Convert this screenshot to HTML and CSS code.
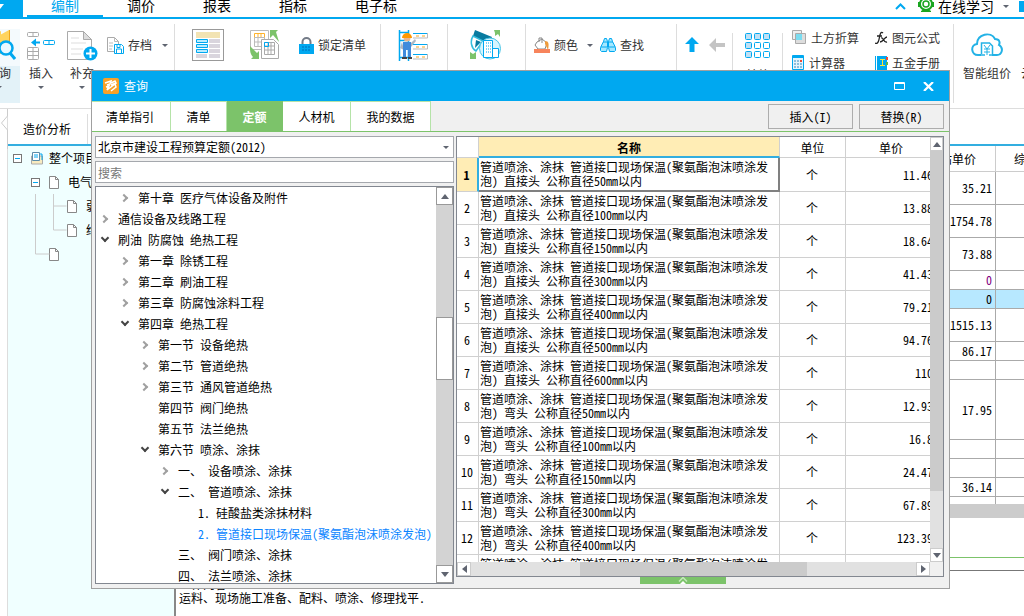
FILE: index.html
```html
<!DOCTYPE html>
<html lang="zh-CN">
<head>
<meta charset="utf-8">
<title>查询</title>
<link rel="stylesheet" href="styles.css">
</head>
<body>
<div class="app">
  <header class="menu">
    <div class="menu-app"><svg width="8" height="6" viewBox="0 0 8 6"><path d="M0 0h4L0 5z" fill="#fff"/></svg></div>
    <nav class="menu-tabs">
      <button class="menu-tab active">编制</button>
      <button class="menu-tab">调价</button>
      <button class="menu-tab">报表</button>
      <button class="menu-tab">指标</button>
      <button class="menu-tab wide">电子标</button>
    </nav>
    <div class="menu-right">
      <svg width="11" height="8" viewBox="0 0 11 8"><path d="M1 7l4.500-4.500L10 7" fill="none" stroke="#00a8f0" stroke-width="2"/></svg>
      <svg width="16" height="14" viewBox="0 0 16 14"><circle cx="8" cy="5" r="6" fill="none" stroke="#19a51f" stroke-width="2"/><circle cx="8" cy="5" r="3" fill="none" stroke="#19a51f" stroke-width="1.500"/><path d="M0 3h2v5H0zM14 3h2v5h-2zM3 12l3-2h4l3 2v1H3z" fill="#19a51f"/></svg>
      <span>在线学习</span>
      <i class="drop"></i>
      <b class="edge"></b>
    </div>
  </header>

  <section class="ribbon">
    <div class="group g1">
      <button class="big cut"><svg width="30" height="32" viewBox="0 0 30 32"><path d="M5 6l10-4v23H5z" fill="#ffd45e"/><path d="M14 6l9-5v23h-9z" fill="#ffd45e"/><path d="M23 1h1v24h-1z" fill="#f0a81c"/><circle cx="20" cy="19" r="6.500" fill="#e9f8ff" stroke="#00a8f0" stroke-width="2.500"/><path d="M24 24l5 6" stroke="#00a8f0" stroke-width="3"/></svg><span>查询</span><i class="drop"></i></button>
      <button class="big"><svg width="30" height="32" viewBox="0 0 30 32"><g fill="none" stroke="#aaa"><rect x="1.500" y="3.500" width="11" height="4" rx="1"/><path d="M7 3.500v4"/><rect x="1.500" y="18.500" width="11" height="12" rx="1"/><path d="M7 18.500v12M1.500 22.500h11M1.500 26.500h11"/></g><path d="M5 13.500l5-4v3h4v2h-4v3z" fill="#00a8f0"/><rect x="17.500" y="11.500" width="11" height="4" rx="1" fill="none" stroke="#00a8f0"/><path d="M23 11.500v4" stroke="#00a8f0"/></svg><span>插入</span><i class="drop"></i></button>
      <button class="big"><svg width="32" height="32" viewBox="0 0 32 32"><path d="M1.500 2.500h16l8 8v20h-24z" fill="#fff" stroke="#aaa"/><path d="M17.500 2.500v8h8z" fill="#ddd" stroke="#aaa"/><path d="M5 9h8M5 14h15M5 20h12M5 25h10" stroke="#ddd"/><circle cx="24.500" cy="24.500" r="7" fill="#00a8f0"/><path d="M20 24.500h9M24.500 20v9" stroke="#fff" stroke-width="2"/></svg><span>补充</span><i class="drop"></i></button>
      <button class="small"><svg width="17" height="17" viewBox="0 0 17 17"><path d="M.500.500h7l4 4v10h-11z" fill="#fff" stroke="#aaa"/><path d="M7.500.500v4h4M2 6h4M2 9h4M2 12h3" fill="none" stroke="#bbb"/><path d="M7.500 7.500h7l2 2v7h-9z" fill="#fff" stroke="#00a8f0"/><path d="M9.500 16v-4h5v4M10 7.500v3h3v-3" fill="none" stroke="#00a8f0"/></svg><span>存档</span><i class="drop"></i></button>
    </div>
    <div class="group g2">
      <button class="big"><svg width="32" height="32" viewBox="0 0 32 32"><rect x=".500" y=".500" width="31" height="31" fill="#fff" stroke="#999"/><path fill="#f2e3b3" d="M4 3h24v6H4z"/><g fill="#b8ecff" stroke="#00a8f0"><path d="M4.500 10.500h11v3h-11zM4.500 15.500h11v3h-11zM4.500 20.500h11v3h-11z"/></g><path fill="#d9d5dd" d="M17 10h11v4H17zM17 15h11v4H17zM17 20h11v4H17zM17 25h11v4H17zM4 25h11v4H4z"/></svg><span>整理清单</span></button>
      <button class="big"><svg width="30" height="32" viewBox="0 0 30 32"><path d="M.500 1.500h18v19H.500z" fill="#fff" stroke="#bbb"/><path d="M4.500 4.500h10v4h-10zM8 4.500v4M11 4.500v4" fill="none" stroke="#ffb32c"/><path d="M4.500 8.500h10v9h-10zM8 9v8M4.500 13h10" fill="none" stroke="#bbb"/><path d="M11.500 10.500h12l5 5v14h-17z" fill="#fff" stroke="#aaa"/><path d="M14.500 13.500h10v12h-10zM18 13v12M21 13v12M14.500 17h10M14.500 21h10" fill="none" stroke="#aaa"/><path d="M14.500 13.500h4v4h-4z" fill="none" stroke="#00a8f0"/><path d="M20 1h8l-2 2 3 10-6-7-3 3zM0 17l7 7 2-2v8H1l2-2c-3-3-3-7-3-11z" fill="#7cc36a"/></svg><span>复用数据</span></button>
      <button class="small"><svg width="15" height="17" viewBox="0 0 15 17"><path d="M3.500 8V5a4 4 0 0 1 8 0v3" fill="none" stroke="#737b87" stroke-width="2"/><path d="M0 7h15v10H0z" fill="#00a8f0"/><path d="M3 10h9M3 13h9" stroke="#0070b8" stroke-dasharray="2 1"/></svg><span>锁定清单</span></button>
    </div>
    <div class="group g3">
      <button class="big"><svg width="32" height="32" viewBox="0 0 32 32"><path d="M1.500 1v31M10.500 1v31M1 3.500h10M1 11.500h10M1 28.500h10" stroke="#00a8f0" stroke-width="1.500"/><path d="M15 4.500h14M15 15.500h14M15 25.500h14" stroke="#00a8f0"/><path d="M29.500 4v5H15M29.500 15v5H15M29.500 25v5H15" fill="none" stroke="#bbb"/><path d="M18 7h3M24 7h3M18 18h3M24 18h3M18 28h3M24 28h3" stroke="#f5a623"/><circle cx="9" cy="9" r="3.500" fill="#e9b58d"/><path d="M4 9a5 5 0 0 1 10 0z" fill="#ff9800"/><path d="M4 13l-2 6 4 2zM13 14l4-4 1 2-5 6z" fill="#aeb7c2"/><path d="M5 13h8v15h-3v-7H8v7H5z" fill="#3f8bdc"/><path d="M4 28h5v2H4zM10 28h4v2h-4z" fill="#444"/></svg><span>安装费用</span></button>
    </div>
    <div class="group g4">
      <button class="big"><svg width="32" height="32" viewBox="0 0 32 32"><path d="M5 1l17 7-3 7L3 7z" fill="#087ba0"/><path d="M3 7l10 5-7 10C1 19 0 12 3 7z" fill="#fff" stroke="#35bddd" stroke-width="1.500"/><path d="M6 11l5 2-6 6z" fill="#087ba0"/><circle cx="20" cy="19.500" r="10.500" fill="#d5f5ff" stroke="#4ac5e6"/><path d="M13.500 11.500h9v17h-9zM22.500 19.500h6v9h-6" fill="#fff" stroke="#00a8f0"/><path d="M16 14h5M16 17h5M16 20h5M16 23h5" stroke="#00a8f0" stroke-dasharray="1 1"/><path d="M24 1h6v7l-2-3-3 2V4zM0 30v-7l3 2 3-2v7z" fill="#7cc36a"/></svg><span>复用组价</span></button>
    </div>
    <div class="group g5">
      <button class="small"><svg width="17" height="16" viewBox="0 0 17 16"><path d="M3 5l5-3 5 4-2 6H4L1 8z" fill="#fff" stroke="#888"/><path d="M5 5V1h3v5" fill="none" stroke="#888"/><path d="M11 4c4 0 4 3 3 9l-3-6z" fill="#ee9b3c"/><path fill="#f7845c" d="M0 12h16v4H0z"/></svg><span>颜色</span><i class="drop"></i></button>
      <button class="small find"><svg width="16" height="16" viewBox="0 0 16 16"><g fill="#a5e8ff" stroke="#00a8f0"><path d="M3.500 4.500l1-3h2l1 3v6l-1 4h-5l-1-1v-3zM12.500 4.500l-1-3h-2l-1 3v6l1 4h5l1-1v-3z"/></g><path d="M1 10h6M9 10h6M3 5h10" stroke="#00a8f0"/></svg><span>查找</span></button>
    </div>
    <div class="group g6 short">
      <button class="tool" aria-label="上移"><svg width="14" height="15" viewBox="0 0 14 15"><path d="M7 0l7 7H9.500v8h-5V7H0z" fill="#00a8f0"/></svg></button>
      <button class="tool" aria-label="左移"><svg width="16" height="14" viewBox="0 0 16 14"><path d="M0 7l7-7v5h9v4H7v5z" fill="#c4c4c4"/></svg></button>
    </div>
    <div class="group g7 short">
      <button class="big"><svg width="26" height="26" viewBox="0 0 26 26"><g fill="#bfe0f5" stroke="#00a8f0"><rect x=".500" y=".500" width="6" height="6" rx="1"/><rect x="9.500" y=".500" width="6" height="6" rx="1"/><rect x="18.500" y=".500" width="6" height="6" rx="1"/><rect x=".500" y="9.500" width="6" height="6" rx="1"/><rect x=".500" y="18.500" width="6" height="6" rx="1"/></g><g fill="#fff" stroke="#00a8f0"><rect x="9.500" y="9.500" width="6" height="6" rx="1"/><rect x="18.500" y="9.500" width="6" height="6" rx="1"/><rect x="9.500" y="18.500" width="6" height="6" rx="1"/><rect x="18.500" y="18.500" width="6" height="6" rx="1"/></g></svg><span>其他</span></button>
    </div>
    <div class="group g8">
      <button class="small"><svg width="15" height="15" viewBox="0 0 15 15"><path d="M.500.500h9v9h-9z" fill="#eee" stroke="#aaa"/><path d="M3.500 3.500h10v10h-10z" fill="#ddd" stroke="#aaa"/><path d="M4 4h6v6H4z" fill="#7bdcf0"/></svg><span>土方折算</span></button>
      <button class="small"><svg width="13" height="14" viewBox="0 0 13 14"><path d="M8 2C6 0 5 3 4.500 6S3 14 0 12M2 5h5M6 7c3-1 2 5 6 4M12 6c-3 0-3 5-7 5" fill="none" stroke="#222" stroke-width="1.300"/></svg><span>图元公式</span></button>
      <button class="small"><svg width="13" height="15" viewBox="0 0 13 15"><path d="M.500.500h11v14H.500z" fill="#e5f5fc" stroke="#00a8f0"/><path d="M0 1h12v2H0z" fill="#00a8f0"/><path d="M2 6h8M2 9h8M2 12h8" stroke="#3887bb" stroke-dasharray="2 1"/><path d="M8 5h2v2H8z" fill="#ef4b34"/></svg><span>计算器</span></button>
      <button class="small"><svg width="13" height="14" viewBox="0 0 13 14"><path d="M0 0h1v14H0zM2 0h10v14H2z" fill="#00a8f0"/><path d="M5 3.500h5M7.500 3v7M5 9.500h5" stroke="#ffe735"/><path fill="#ef4b34" d="M11 1h2v3h-2z"/><path fill="#62b64b" d="M11 6h2v3h-2z"/></svg><span>五金手册</span></button>
    </div>
    <div class="group g9">
      <button class="big"><svg width="32" height="32" viewBox="0 0 32 32"><path d="M10 26H7C0 26-1 16 6 15c0-10 14-13 18-5 5 0 5 4 4 6 5 3 3 10-2 10h-5" fill="none" stroke="#23b2e6" stroke-width="2"/><path d="M10.500 25V14h8l3 3v8M9 26h5M18 26h5" fill="none" stroke="#23b2e6" stroke-width="1.500"/><path d="M13 16l3 4 3-4M13 20h6M13 23h6M16 20v6" fill="none" stroke="#23b2e6"/></svg><span>智能组价</span></button>
      <button class="big"><span class="no-icon">云检查</span></button>
    </div>
  </section>

  <div class="work">
    <div class="gutter"><svg width="8" height="40" viewBox="0 0 8 40"><path d="M7.500 0v7L1.500 14l6 7v19" fill="none" stroke="#ccc"/></svg></div>
    <aside class="project">
      <div class="project-tab"><span>造价分析</span></div>
      <div class="project-tree">
        <svg class="connectors" width="60" height="64" viewBox="0 0 60 64"><path d="M.500 0v60h14M18.500 0v36h13M18.500 12h13" fill="none" stroke="#ccc"/></svg>
        <div class="node"><i class="minus"></i><svg width="14" height="14" viewBox="0 0 14 14"><path d="M1.500 5h11v8h-11z" fill="#f8ebc0" stroke="#aaa"/><path d="M2.500 1.500h7v8h-7z" fill="#fff" stroke="#5b8ca8"/><path d="M4 4h4M4 6h4M10 3h2v6" fill="none" stroke="#00a8f0"/></svg><span>整个项目</span></div>
        <div class="node l1"><i class="minus"></i><svg class="doc" width="12" height="13" viewBox="0 0 12 13"><path d="M1.500.500h6l3 3v9h-9z" fill="#fff" stroke="#888"/><path d="M7.500.500v3h3" fill="none" stroke="#888"/></svg><span>电气</span></div>
        <div class="node l2"><svg class="doc" width="12" height="13" viewBox="0 0 12 13"><path d="M1.500.500h6l3 3v9h-9z" fill="#fff" stroke="#888"/><path d="M7.500.500v3h3" fill="none" stroke="#888"/></svg><span>弱电</span></div>
        <div class="node l2"><svg class="doc" width="12" height="13" viewBox="0 0 12 13"><path d="M1.500.500h6l3 3v9h-9z" fill="#fff" stroke="#888"/><path d="M7.500.500v3h3" fill="none" stroke="#888"/></svg><span>给水</span></div>
        <div class="node l3"><svg class="doc" width="12" height="13" viewBox="0 0 12 13"><path d="M1.500.500h6l3 3v9h-9z" fill="#fff" stroke="#888"/><path d="M7.500.500v3h3" fill="none" stroke="#888"/></svg></div>
      </div>
    </aside>
    <main class="sheet">
      <div class="sheet-head"></div>
      <table class="costs">
        <colgroup><col><col class="c-price"><col class="c-total"></colgroup>
        <thead><tr><th></th><th>暂估单价</th><th class="next">综合</th></tr></thead>
        <tbody>
          <tr class="two"><td></td><td>35.21</td><td></td></tr>
          <tr class="two"><td></td><td>1754.78</td><td></td></tr>
          <tr class="two"><td></td><td>73.88</td><td></td></tr>
          <tr><td></td><td class="purple">0</td><td></td></tr>
          <tr class="selected"><td></td><td>0</td><td></td></tr>
          <tr class="two"><td></td><td>1515.13</td><td></td></tr>
          <tr><td></td><td>86.17</td><td></td></tr>
          <tr><td></td><td></td><td></td></tr>
          <tr class="four"><td></td><td>17.95</td><td></td></tr>
          <tr><td></td><td></td><td></td></tr>
          <tr><td></td><td></td><td></td></tr>
          <tr><td></td><td>36.14</td><td></td></tr>
          <tr class="part"><td></td><td></td><td></td></tr>
        </tbody>
      </table>
      <div class="sheet-scroll"></div>
      <div class="sheet-gap"></div>
      <div class="notes"><p>工作内容:</p><p>运料、现场施工准备、配料、喷涂、修理找平.</p></div>
    </main>
  </div>

  <div class="dialog" role="dialog" aria-labelledby="dialog-title">
    <div class="title">
      <svg width="16" height="16" viewBox="0 0 16 16"><rect width="16" height="16" rx="2" fill="#f7a128"/><path d="M2 5l6-2-1 3-3 1M8 5l4-2 1 2-5 2M3 9l3-1-2 4 8-6 1 3-5 4" fill="none" stroke="#fff" stroke-width="1.500"/></svg>
      <h1 id="dialog-title">查询</h1>
      <button aria-label="最大化"><svg width="11" height="8" viewBox="0 0 11 8"><path d="M.500.500h10v7H.500zM0 1.500h11" fill="none" stroke="#fff"/></svg></button>
      <button aria-label="关闭"><svg width="11" height="9" viewBox="0 0 11 9"><path d="M1 0l9 9M10 0L1 9" stroke="#fff" stroke-width="2.200"/></svg></button>
    </div>
    <div class="tabs">
      <button class="t1">清单指引</button><button class="t2">清单</button><button class="t2 on">定额</button><button class="t3">人材机</button><button class="t4">我的数据</button>
      <div class="actions"><button>插入(I)</button><button>替换(R)</button></div>
    </div>
    <div class="panes">
      <div class="left">
        <div class="combo"><select aria-label="定额库"><option>北京市建设工程预算定额(2012)</option></select><i class="drop"></i></div>
        <input class="search" type="text" placeholder="搜索" aria-label="搜索">
        <div class="tree-box">
          <ul class="tree">
            <li class="d1 shut">第十章 医疗气体设备及附件</li>
            <li class="shut">通信设备及线路工程</li>
            <li class="open">刷油 防腐蚀 绝热工程</li>
            <li class="d1 shut">第一章 除锈工程</li>
            <li class="d1 shut">第二章 刷油工程</li>
            <li class="d1 shut">第三章 防腐蚀涂料工程</li>
            <li class="d1 open">第四章 绝热工程</li>
            <li class="d2 shut">第一节 设备绝热</li>
            <li class="d2 shut">第二节 管道绝热</li>
            <li class="d2 shut">第三节 通风管道绝热</li>
            <li class="d2">第四节 阀门绝热</li>
            <li class="d2">第五节 法兰绝热</li>
            <li class="d2 open">第六节 喷涂、涂抹</li>
            <li class="d3 shut">一、 设备喷涂、涂抹</li>
            <li class="d3 open">二、 管道喷涂、涂抹</li>
            <li class="d4">1. 硅酸盐类涂抹材料</li>
            <li class="d4 current">2. 管道接口现场保温(聚氨酯泡沫喷涂发泡)</li>
            <li class="d3">三、 阀门喷涂、涂抹</li>
            <li class="d3">四、 法兰喷涂、涂抹</li>
          </ul>
          <div class="tree-scroll"><b class="arrow up"></b><b class="thumb"></b><b class="arrow down"></b></div>
        </div>
      </div>
      <div class="right">
        <div class="grid">
          <div class="view">
            <table class="items">
              <colgroup><col class="c-no"><col><col class="c-unit"><col class="c-cost"></colgroup>
              <thead><tr><th></th><th class="hot">名称</th><th>单位</th><th>单价</th></tr></thead>
              <tbody>
                <tr class="cur"><th>1</th><td>管道喷涂、涂抹 管道接口现场保温(聚氨酯泡沫喷涂发泡) 直接头 公称直径50mm以内</td><td>个</td><td>11.46</td></tr>
                <tr><th>2</th><td>管道喷涂、涂抹 管道接口现场保温(聚氨酯泡沫喷涂发泡) 直接头 公称直径100mm以内</td><td>个</td><td>13.88</td></tr>
                <tr><th>3</th><td>管道喷涂、涂抹 管道接口现场保温(聚氨酯泡沫喷涂发泡) 直接头 公称直径150mm以内</td><td>个</td><td>18.64</td></tr>
                <tr><th>4</th><td>管道喷涂、涂抹 管道接口现场保温(聚氨酯泡沫喷涂发泡) 直接头 公称直径300mm以内</td><td>个</td><td>41.43</td></tr>
                <tr><th>5</th><td>管道喷涂、涂抹 管道接口现场保温(聚氨酯泡沫喷涂发泡) 直接头 公称直径400mm以内</td><td>个</td><td>79.21</td></tr>
                <tr><th>6</th><td>管道喷涂、涂抹 管道接口现场保温(聚氨酯泡沫喷涂发泡) 直接头 公称直径500mm以内</td><td>个</td><td>94.76</td></tr>
                <tr><th>7</th><td>管道喷涂、涂抹 管道接口现场保温(聚氨酯泡沫喷涂发泡) 直接头 公称直径600mm以内</td><td>个</td><td>110</td></tr>
                <tr><th>8</th><td>管道喷涂、涂抹 管道接口现场保温(聚氨酯泡沫喷涂发泡) 弯头 公称直径50mm以内</td><td>个</td><td>12.93</td></tr>
                <tr><th>9</th><td>管道喷涂、涂抹 管道接口现场保温(聚氨酯泡沫喷涂发泡) 弯头 公称直径100mm以内</td><td>个</td><td>16.8</td></tr>
                <tr><th>10</th><td>管道喷涂、涂抹 管道接口现场保温(聚氨酯泡沫喷涂发泡) 弯头 公称直径150mm以内</td><td>个</td><td>24.47</td></tr>
                <tr><th>11</th><td>管道喷涂、涂抹 管道接口现场保温(聚氨酯泡沫喷涂发泡) 弯头 公称直径300mm以内</td><td>个</td><td>67.89</td></tr>
                <tr><th>12</th><td>管道喷涂、涂抹 管道接口现场保温(聚氨酯泡沫喷涂发泡) 弯头 公称直径400mm以内</td><td>个</td><td>123.39</td></tr>
                <tr><th></th><td>管道喷涂、涂抹 管道接口现场保温(聚氨酯泡沫喷涂发泡) 弯头 公称直径500mm以内</td><td></td><td></td></tr>
              </tbody>
            </table>
          </div>
          <div class="vbar"><b class="arrow up"></b><b class="thumb"></b><b class="arrow down"></b></div>
          <div class="hbar"><b class="arrow prev"></b><b class="thumb"></b><b class="arrow fwd"></b></div>
          <div class="corner"></div>
        </div>
        <button class="expand" aria-label="展开"><svg width="10" height="7" viewBox="0 0 10 7"><path d="M1 4.500l4-4 4 4" fill="none" stroke="#c5e8bb" stroke-width="1.500"/><path d="M2 7l3-3 3 3z" fill="#fff"/></svg></button>
      </div>
    </div>
  </div>
</div>
</body>
</html>
```

FILE: styles.css
```css
* { box-sizing: border-box; }
body {
  margin: 0;
  background: #fff;
  color: #000;
  font: 12px/14px "Noto Sans Mono CJK SC", "Noto Sans CJK SC", sans-serif;
}
button, input, select { font: inherit; color: inherit; }
button { border: 0; padding: 0; margin: 0; background: none; white-space: nowrap; }
svg { display: block; flex: none; }
p, h1, ul { margin: 0; padding: 0; }
.app { position: relative; display: flex; flex-direction: column; height: 100vh; overflow: hidden; }
.drop { flex: none; width: 0; height: 0; border: 3px solid transparent; border-top-color: #5f6470; border-bottom: 0; }

/* main menu */
.menu { display: flex; flex: none; height: 19px; border-bottom: 2px solid #00a8f0; font: 14px/10px "Noto Sans CJK SC", sans-serif; }
.menu-app { width: 23px; height: 19px; padding-top: 4px; background: #00a8f0; }
.menu-tabs { display: flex; margin-left: 4px; }
.menu-tab { display: flex; justify-content: center; width: 76px; height: 17px; line-height: 10px; border-bottom: 2px solid transparent; }
.menu-tab.wide { width: 90px; }
.menu-tab.active { color: #00a8f0; border-color: #00a8f0; }
.menu-right { display: flex; align-items: center; height: 12px; gap: 4px; margin-left: auto; }
.menu-right svg:first-child { margin-right: 8px; }
.menu-right .drop { margin-left: 5px; }
.edge { width: 5px; height: 11px; margin-left: 6px; background: #00a8f0; }

/* ribbon */
.ribbon { display: flex; flex: none; height: 90px; padding-top: 5px; border-bottom: 1px solid #ddd; overflow: hidden; color: #333; font: 12px/14px "Noto Sans CJK SC", sans-serif; }
.group { display: flex; align-items: flex-start; flex: none; height: 79px; padding-top: 5px; border-right: 1px solid #ddd; }
.group.short { height: 70px; margin-top: 9px; padding-top: 0; }
.big { display: flex; flex-direction: column; align-items: center; }
.big span { margin-top: 5px; }
.big .drop { margin-top: 6px; }
.small { display: flex; align-items: center; height: 32px; gap: 4px; }
.small .drop { margin-left: 6px; }
.cut { width: 20px; height: 74px; background: linear-gradient(#f4fafd 50%, #e3f2f8 50%); overflow: hidden; }
.cut svg { margin-right: 18px; }
.cut span { padding-right: 22px; }
.cut .drop { margin-right: 22px; }
.g1 { width: 175px; gap: 10px; }
.g1 .cut { margin-right: -4px; }
.g1 .small { margin-left: -1px; }
.g2 { width: 206px; padding-left: 9px; }
.g2 .big { width: 48px; }
.g2 .big + .big { margin-left: 9px; }
.g2 .small { margin-left: 10px; }
.g2 .big span, .g3 .big span, .g4 .big span { margin-top: 8px; }
.g3 { width: 67px; justify-content: center; }
.g4 { width: 78px; justify-content: center; }
.g5 { width: 151px; padding-left: 8px; }
.g5 .small:first-child { gap: 3px; }
.find { margin-left: 7px; }
.g6 { width: 56px; padding-left: 8px; gap: 10px; }
.tool { display: flex; align-items: center; height: 23px; }
.g7 { width: 50px; justify-content: center; }
.g7 .big span { margin-top: 9px; }
.g8 { display: grid; grid-template-columns: 83px 78px; grid-template-rows: 25px 25px; width: 171px; padding: 1px 0 0 9px; }
.g8 .small { height: 25px; gap: 3px; }
.g8 .small svg { margin-right: 1px; }
.g9 { border: 0; padding-left: 9px; gap: 10px; }
.no-icon { padding-top: 32px; }

/* workspace */
.work { display: flex; flex: 1; min-height: 0; }
.gutter { flex: none; width: 8px; border-right: 1px solid #ddd; }
.project { flex: none; width: 166px; background: #f0ffff; }
.project-tab { display: flex; align-items: center; height: 37px; padding: 4px 0 0 15px; background: #fff; border-bottom: 2px solid #33aee0; font-family: "Noto Sans CJK SC", sans-serif; }
.project-tab span { border-right: 1px solid #ddd; padding: 8px 16px 8px 0; }
.project-tree { position: relative; font-family: "Noto Sans CJK SC", sans-serif; }
.node { display: flex; align-items: center; height: 24px; padding-left: 5px; }
.node svg { margin-left: 8px; }
.node span { margin-left: 5px; }
.node .doc + span { margin-left: 8px; }
.node.l1 { padding-left: 23px; }
.node.l2 { padding-left: 50px; }
.node.l3 { padding-left: 32px; }
.minus { display: flex; align-items: center; justify-content: center; width: 9px; height: 9px; border: 1px solid #777; background: #fff; }
.minus::before { content: ""; width: 5px; height: 1px; background: #00a8f0; }
.connectors { position: absolute; left: 27px; top: 48px; }
.sheet { display: flex; flex-direction: column; flex: 1; min-width: 0; }
.sheet-head { flex: none; height: 37px; border-bottom: 2px solid #33aee0; }
.costs { width: 100%; table-layout: fixed; border-collapse: separate; border-spacing: 0; }
.c-price { width: 85px; }
.c-total { width: 28px; }
.costs th, .costs td { height: 19px; padding: 0 3px; border: solid #aaa; border-width: 0 1px 1px 0; text-align: right; font-weight: 400; overflow: hidden; white-space: nowrap; }
.costs th { height: 26px; padding-right: 19px; border-color: #ccc; }
.costs .next { padding: 0 0 0 18px; text-align: left; }
.costs .two td { height: 33px; }
.costs .four td { height: 60px; }
.costs .part td { height: 7px; border-bottom: 0; }
.costs td:last-child, .costs th:last-child { border-right: 0; }
.costs .selected td { background: #b7e8ff; }
.costs .purple { color: #800080; }
.sheet-scroll { flex: none; height: 14px; background: #ccc; }
.sheet-gap { flex: none; height: 53px; border-bottom: 1px solid #777; background: linear-gradient(#7cc36a, #7cc36a) 0 39px / 100% 1px no-repeat; }
.notes { flex: 1; padding: 6px 3px; border-left: 2px solid #888; }

/* query window */
.dialog { position: absolute; top: 70px; right: 74px; bottom: 27px; left: 91px; display: flex; flex-direction: column; border: 1px solid #a0a0a0; background: #f0f0f0; }
.title { display: flex; flex: none; align-items: center; height: 30px; padding: 0 15px 0 11px; background: #00a8f0; color: #fff; }
.title h1 { flex: 1; margin-left: 5px; font: 12px/14px "Noto Sans CJK SC", sans-serif; }
.title button + button { margin-left: 18px; }
.tabs { display: flex; flex: none; height: 31px; border-bottom: 1px solid #7cc36a; }
.tabs > button { border: solid #b5e3a8; border-width: 1px 1px 0 0; background: #fff; }
.tabs .t1 { width: 79px; padding-right: 2px; }
.tabs .t2 { width: 56px; }
.tabs .t3 { width: 68px; }
.tabs .t4 { width: 80px; }
.tabs .on { border-color: #7cc36a; background: #7cc36a; color: #fff; font-weight: 700; }
.actions { display: flex; gap: 6px; margin: 3px 5px 2px auto; }
.actions button { width: 85px; border: 1px solid #adadad; }
.panes { display: flex; flex: 1; min-height: 0; gap: 2px; padding: 4px 5px 0 3px; }
.left { display: flex; flex-direction: column; gap: 3px; flex: 0 0 359px; padding-bottom: 4px; }
.combo { position: relative; flex: none; height: 22px; }
.combo select { width: 100%; height: 22px; padding: 0 2px; border: 1px solid #a5a8ad; border-radius: 0; background: #fff; appearance: none; }
.combo .drop { position: absolute; right: 5px; top: 10px; }
.search { flex: none; width: 100%; height: 22px; padding: 0 2px; border: 1px solid #a5a8ad; background: #fff; }
.search::placeholder { color: #777; opacity: 1; }
.tree-box { display: flex; flex: 1; min-height: 0; border: 1px solid #828790; background: #fff; }
.tree { flex: 1; min-width: 0; overflow: hidden; list-style: none; }
.tree li { display: flex; align-items: center; height: 21px; padding-left: 22px; white-space: pre; }
.tree li.d1 { padding-left: 42px; }
.tree li.d2 { padding-left: 62px; }
.tree li.d3 { padding-left: 82px; }
.tree li.d4 { padding-left: 102px; }
.tree .current { color: #0a84ff; }
.tree .shut::before, .tree .open::before { content: ""; flex: none; width: 4px; height: 4px; margin-left: -17px; margin-right: 11px; border: solid #a0a0a0; border-width: 2px 2px 0 0; transform: rotate(45deg); }
.tree .open::before { margin-left: -16px; margin-right: 10px; margin-bottom: 4px; border-color: #444; transform: rotate(135deg); }
.arrow { display: flex; align-items: center; justify-content: center; flex: none; background: #fff; border: 1px solid #ccc; }
.arrow::before { content: ""; border: 4px solid transparent; }
.up::before { border-width: 0 4px 5px; border-bottom-color: #5f6470; }
.down::before { border-width: 5px 4px 0; border-top-color: #5f6470; }
.prev::before { border-width: 4px 5px 4px 0; border-right-color: #5f6470; }
.fwd::before { border-width: 4px 0 4px 5px; border-left-color: #5f6470; }
.tree-scroll { display: flex; flex-direction: column; flex: none; width: 17px; background: #d3d3d3; }
.tree-scroll .arrow { height: 18px; border-color: #999; }
.tree-scroll .thumb { flex: 64; margin-top: 112px; border: 1px solid #999; background: #fff; }
.tree-scroll .down { margin-top: 185px; }
.right { display: flex; flex-direction: column; flex: 1; min-width: 0; }
.grid { display: grid; grid-template: minmax(0, 1fr) 14px / minmax(0, 1fr) 13px; flex: none; height: calc(100% - 11px); border: 1px solid #828790; background: #fff; }
.view { overflow: hidden; }
.items { width: calc(100% + 7px); table-layout: fixed; border-collapse: separate; border-spacing: 0; }
.c-no { width: 22px; }
.c-unit { width: 66px; }
.c-cost { width: 91px; }
.items th, .items td { height: 33px; padding: 2px 2px 2px 1px; border: solid #d0d0d0; border-width: 0 1px 1px 0; text-align: center; font-weight: 400; word-break: break-all; }
.items thead th { height: 21px; padding: 2px 0 0; }
.items thead .hot { background: #ffedb5; border-bottom: 2px solid #33aee0; font-weight: 700; }
.items td:nth-child(2) { text-align: left; }
.items td:nth-child(4) { padding-right: 3px; text-align: right; }
.items .cur th { background: #ffedb5; border-right: 2px solid #33aee0; font-weight: 700; }
.items .cur td:nth-child(2) { border-color: #808080; border-width: 0 2px 2px 0; }
.vbar { display: flex; flex-direction: column; background: #e1e1e1; }
.vbar .arrow { height: 14px; }
.vbar .thumb { flex: 341; background: #cbcbcb; }
.vbar .down { margin-top: 57px; }
.hbar { display: flex; background: #e1e1e1; }
.hbar .arrow { width: 14px; }
.hbar .thumb { flex: 1; margin: 0 23%; background: #cbcbcb; }
.corner { background: #f0f0f0; }
.expand { display: flex; justify-content: center; align-self: center; width: 86px; height: 7px; margin-right: 35px; background: #7cc36a; }
```
